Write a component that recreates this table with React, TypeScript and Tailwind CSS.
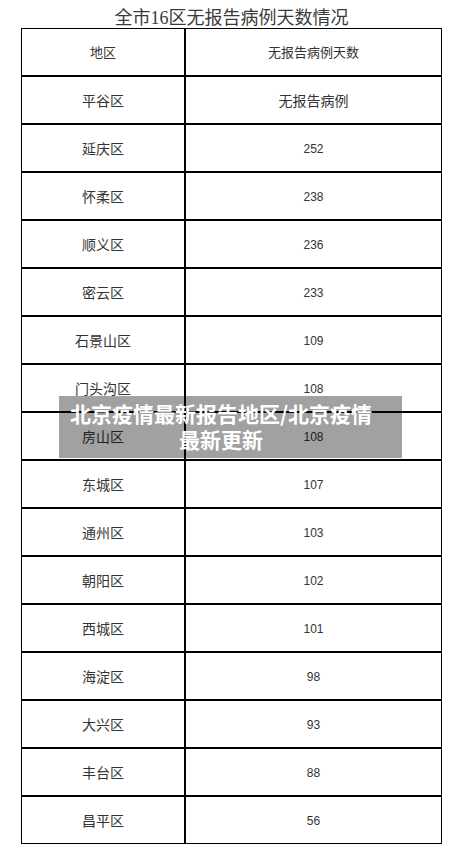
import React from 'react';

const rows: [string, string][] = [
  ['平谷区', '无报告病例'],
  ['延庆区', '252'],
  ['怀柔区', '238'],
  ['顺义区', '236'],
  ['密云区', '233'],
  ['石景山区', '109'],
  ['门头沟区', '108'],
  ['房山区', '108'],
  ['东城区', '107'],
  ['通州区', '103'],
  ['朝阳区', '102'],
  ['西城区', '101'],
  ['海淀区', '98'],
  ['大兴区', '93'],
  ['丰台区', '88'],
  ['昌平区', '56'],
];

const App = () => {
  return (
    <div className="relative w-[463px] h-[855px] bg-white text-[#333] font-['Noto_Sans_CJK_SC',sans-serif]">
      <h1 className="h-[28px] pt-[8px] text-center text-[18px] leading-[20px] text-[#3a3a3a] font-['Liberation_Serif','Noto_Sans_CJK_SC',serif]">
        全市16区无报告病例天数情况
      </h1>
      <div className="ml-[21px] w-[421px] border border-black">
        <div className="flex h-[48px] border-b-2 border-black text-[13px]">
          <div className="w-[164px] border-r-2 border-black flex items-center justify-center">地区</div>
          <div className="flex-1 flex items-center justify-center">无报告病例天数</div>
        </div>
        {rows.map(([area, days], i) => {
          const isText = /[^\d]/.test(days);
          return (
            <div
              key={area}
              className={i === rows.length - 1 ? 'flex h-[46px]' : 'flex h-[48px] border-b-2 border-black'}
            >
              <div className="w-[164px] border-r-2 border-black flex items-center justify-center text-[14px]">
                {area}
              </div>
              <div
                className={
                  isText
                    ? 'flex-1 flex items-center justify-center text-[14px]'
                    : "flex-1 flex items-center justify-center pt-px text-[12px] font-['Liberation_Sans',sans-serif]"
                }
              >
                {days}
              </div>
            </div>
          );
        })}
      </div>

      {/* watermark title over the table */}
      <div className="absolute left-[59px] top-[396px] w-[343px] h-[62px] bg-[rgba(0,0,0,0.37)] pt-[4px] pr-[19px] text-center text-white font-bold text-[21px] leading-[26px]">
        北京疫情最新报告地区/北京疫情
        <br />
        最新更新
      </div>
    </div>
  );
};

export default App;
